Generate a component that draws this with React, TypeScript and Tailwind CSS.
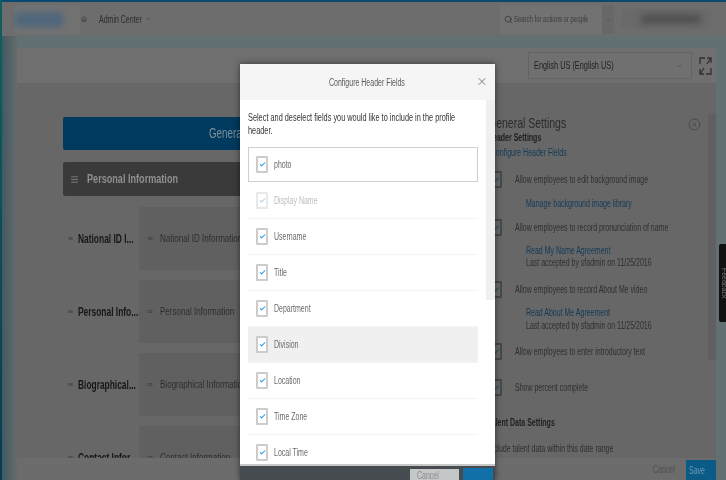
import { Check, ChevronDown, Search, X, Menu, CircleX, Home, GripHorizontal } from 'lucide-react'
import type { ReactNode } from 'react'

const fields = ['Username', 'Title', 'Department', 'Division', 'Location', 'Time Zone', 'Local Time']

const sections = [
  { label: 'National ID I...', card: 'National ID Information' },
  { label: 'Personal Info...', card: 'Personal Information' },
  { label: 'Biographical...', card: 'Biographical Information' },
  { label: 'Contact Infor...', card: 'Contact Information' },
]

// the whole screenshot is squeezed sideways, so text gets the same squeeze
function T({ className = '', children }: { className?: string; children: ReactNode }) {
  return <span className={`block shrink-0 origin-left scale-x-[0.7] whitespace-nowrap ${className}`}>{children}</span>
}

function Box({ dim = false, dark = false }: { dim?: boolean; dark?: boolean }) {
  return (
    <div
      className={`flex h-[17px] w-[12px] shrink-0 items-center justify-center rounded-[1px] border-2 ${
        dark ? 'border-[#484848] bg-[#686868]' : dim ? 'border-[#e8e8e8] bg-white' : 'border-[#cccccc] bg-white'
      }`}
    >
      <Check
        strokeWidth={3.5}
        className={`h-[9px] w-[7px] ${dark ? 'text-[#1d4a68]' : dim ? 'text-[#a8d0ea]' : 'text-[#1e90e0]'}`}
      />
    </div>
  )
}

function SettingRow({ label, className = '' }: { label: string; className?: string }) {
  return (
    <div className={`flex items-center gap-[13px] pl-[2px] ${className}`}>
      <Box dark />
      <T className="text-[10px] text-[#2f2f2f]">{label}</T>
    </div>
  )
}

function SectionRow({ label, card }: { label: string; card: string }) {
  return (
    <div className="flex h-[63px] items-center">
      <GripHorizontal className="h-[7px] w-[5px] shrink-0 text-[#3c3c3c]" />
      <T className="ml-[5px] w-[59px] text-[12px] font-bold text-[#171717]">{label}</T>
      <div className="ml-[2px] flex h-full w-[200px] items-center rounded-[2px] bg-[#606060] pl-[8px]">
        <GripHorizontal className="h-[7px] w-[6px] shrink-0 text-[#3c3c3c]" />
        <T className="ml-[7px] text-[11.5px] text-[#2e2e2e]">{card}</T>
      </div>
    </div>
  )
}

function ExpandIcon() {
  return (
    <svg viewBox="0 0 13 18" className="ml-[7px] h-[18px] w-[13px] text-[#303030]" fill="none" stroke="currentColor" strokeWidth="1.3">
      <path d="M6 1H1v6" />
      <path d="M12 11v6H7" />
      <path d="M8 1h4v5M12 1 8 7" />
      <path d="M1 12v5h4M1 17l4-6" />
    </svg>
  )
}

export default function App() {
  return (
    <div className="h-[480px] w-[726px] overflow-hidden bg-[#0f5a5e]">
      <div className="relative h-[480px] w-[726px] overflow-hidden bg-[#637073] blur-[0.6px] [font-family:'Liberation_Sans',Arial,sans-serif]">
        {/* Teal edge of the page behind the overlay */}
        <div className="absolute bottom-0 left-0 top-0 w-[2px] bg-gradient-to-b from-[#0f5f60] to-[#0d3a4f]" />
        <div className="absolute bottom-0 left-[2px] top-[36px] w-[15px] bg-gradient-to-r from-[#3f5a62] to-[#666a6b]" />

        {/* Top bar */}
        <header className="ml-[2px] flex h-[36px] items-center border-t-2 border-[#0a4a70] bg-[#6d6d6d] pl-[13px]">
          <div className="flex h-[29px] w-[65px] items-center bg-[#727272]">
            <div className="h-[15px] w-[48px] rounded-sm bg-[#4f677c] blur-[3px]" />
          </div>
          <Home className="ml-[1px] h-[12px] w-[6px] text-[#303030]" />
          <T className="ml-[12px] text-[10px] text-[#2c2c2c]">Admin Center</T>
          <ChevronDown className="-ml-[15px] h-[8px] w-[7px] text-[#3a3a3a]" />
          <div className="ml-[348px] flex h-[29px] w-[114px] items-center bg-[#727272] pl-[4px]">
            <Search className="h-[13px] w-[9px] shrink-0 text-[#333]" />
            <T className="ml-[1px] w-[88px] text-[8.5px] text-[#3c3c3c]">Search for actions or people</T>
            <div className="flex h-full w-[12px] items-center justify-center bg-[#686868]">
              <ChevronDown className="h-[7px] w-[6px] text-[#444]" />
            </div>
          </div>
          <div className="ml-[7px] flex h-[20px] w-[90px] items-center rounded-sm bg-[#6a6a6a] pl-[20px]">
            <div className="h-[10px] w-[60px] bg-[#525252] blur-[3px]" />
          </div>
        </header>

        {/* Page */}
        <main className="ml-[17px] mr-[10px] pt-[12px]">
          <div className="flex h-[35px] items-center justify-end bg-[#6f6f6f] pr-[4px]">
            <div className="flex h-[27px] w-[164px] items-center justify-between border border-[#646464] bg-[#707070] pl-[5px] pr-[8px]">
              <T className="text-[10.5px] font-medium text-[#1f1f1f]">English US (English US)</T>
              <ChevronDown className="h-[8px] w-[7px] text-[#444]" />
            </div>
            <ExpandIcon />
          </div>

          <div className="flex h-[397px] bg-[#676767]">
            {/* Left column */}
            <div className="w-[471px] shrink-0 pl-[46px] pt-[34px]">
              <div className="flex h-[33px] items-center rounded-[2px] bg-[#003a5e] pl-[146px]">
                <T className="text-[14px] text-[#7d8f9c]">General Settings</T>
              </div>
              <div className="mt-[12px] flex h-[34px] items-center rounded-[2px] bg-[#3a3a3a] pl-[7px]">
                <Menu className="h-[13px] w-[9px] text-[#8f8f8f]" />
                <T className="ml-[8px] text-[13px] font-bold text-[#8f8f8f]">Personal Information</T>
              </div>
              <div className="mt-[11px] flex flex-col gap-[10px] pl-[5px]">
                {sections.map((s) => (
                  <SectionRow key={s.label} label={s.label} card={s.card} />
                ))}
              </div>
            </div>

            {/* Right column */}
            <div className="relative w-[228px] pt-[32px]">
              <div className="leading-none">
                <T className="text-[15px] text-[#2b2b2b]">General Settings</T>
                <T className="mt-[3px] text-[10px] font-bold text-[#1f1f1f]">Header Settings</T>
                <T className="mt-[5px] pl-[4px] text-[10px] text-[#113a58]">Configure Header Fields</T>
              </div>
              <SettingRow label="Allow employees to edit background image" className="mt-[13px]" />
              <T className="ml-[38px] mt-[8px] text-[10px] text-[#113a58]">Manage background image library</T>
              <SettingRow label="Allow employees to record pronunciation of name" className="mt-[8px]" />
              <div className="ml-[38px] mt-[9px] text-[10px] leading-[12px]">
                <T className="text-[#113a58]">Read My Name Agreement</T>
                <T className="text-[#2f2f2f]">Last accepted by sfadmin on 11/25/2016</T>
              </div>
              <SettingRow label="Allow employees to record About Me video" className="mt-[12px]" />
              <div className="ml-[38px] mt-[8px] text-[10px] leading-[13px]">
                <T className="text-[#113a58]">Read About Me Agreement</T>
                <T className="text-[#2f2f2f]">Last accepted by sfadmin on 11/25/2016</T>
              </div>
              <SettingRow label="Allow employees to enter introductory text" className="mt-[11px]" />
              <SettingRow label="Show percent complete" className="mt-[19px]" />
              <T className="mt-[19px] text-[10px] font-bold text-[#1f1f1f]">Talent Data Settings</T>
              <T className="mt-[11px] text-[10px] text-[#2f2f2f]">Include talent data within this date range</T>

              <CircleX className="absolute left-[200px] top-[33px] h-[17px] w-[13px] text-[#333]" strokeWidth={1} />
              <div className="absolute left-[220px] top-[30px] h-[247px] w-[8px] bg-[#606060]" />
            </div>
          </div>
        </main>

        {/* Feedback tab */}
        <div className="absolute left-[719px] top-[244px] flex h-[78px] w-[8px] items-center justify-center rounded-l-[2px] bg-[#111]">
          <span className="rotate-90 whitespace-nowrap text-[7px] text-[#777]">Feedback</span>
        </div>

        {/* Sticky footer */}
        <div className="absolute bottom-0 left-[17px] flex h-[22px] w-[699px] items-end justify-end bg-[#6c6c6c]">
          <T className="mb-[3px] w-[33px] text-[10px] text-[#4e4e4e]">Cancel</T>
          <div className="flex h-[20px] w-[30px] items-center justify-center bg-[#0c5a86]">
            <T className="ml-[6px] w-full text-[10px] text-[#6b9ab5]">Save</T>
          </div>
        </div>

        {/* Modal */}
        <div className="absolute left-[240px] top-[64px] flex h-[416px] w-[255px] flex-col bg-white shadow-[0_0_6px_rgba(0,0,0,0.55)]">
          <div className="relative flex h-[36px] shrink-0 items-center bg-[#f5f5f5] pl-[89px]">
            <T className="text-[10px] text-[#5a5a5a]">Configure Header Fields</T>
            <X className="absolute right-[7px] top-[9px] h-[17px] w-[12px] text-[#555]" strokeWidth={1.5} />
          </div>
          <div className="relative min-h-0 flex-1 overflow-hidden pl-[8px] pr-[17px]">
            <div className="pt-[11px] text-[10.5px] leading-[13px] text-[#333]">
              <T>Select and deselect fields you would like to include in the profile</T>
              <T>header.</T>
            </div>
            <div className="mt-[10px]">
              <div className="flex h-[35px] items-center border border-[#cfcfcf] pl-[7px]">
                <Box />
                <T className="ml-[6px] text-[10px] text-[#6a6a6a]">photo</T>
              </div>
              <div className="mt-[1px] flex h-[36px] items-center border-b border-[#f4f4f4] pl-[8px]">
                <Box dim />
                <T className="ml-[6px] text-[10px] text-[#bdbdbd]">Display Name</T>
              </div>
              {fields.map((f) => (
                <div
                  key={f}
                  className={`flex h-[36px] shrink-0 items-center border-b border-[#f4f4f4] pl-[8px] ${
                    f === 'Division' ? 'bg-[#f0f0f0]' : ''
                  }`}
                >
                  <Box />
                  <T className="ml-[6px] text-[10px] text-[#6a6a6a]">{f}</T>
                </div>
              ))}
            </div>
            <div className="absolute right-0 top-0 h-[200px] w-[9px] bg-[#efefef]" />
          </div>
          <div className="flex h-[16px] shrink-0 items-end justify-end border-t-2 border-[#c8c8c8] bg-[#464c50] pr-[2px]">
            <div className="flex h-[11px] w-[49px] items-start justify-center overflow-hidden bg-[#c4c7c8]">
              <T className="ml-[14px] w-full text-[10px] leading-[14px] text-[#8a8a8a]">Cancel</T>
            </div>
            <div className="ml-[4px] h-[12px] w-[30px] bg-[#1270a8]" />
          </div>
        </div>
      </div>
    </div>
  )
}
